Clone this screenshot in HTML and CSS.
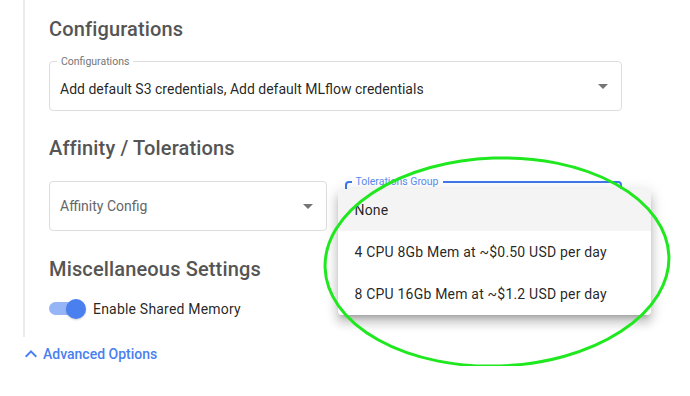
FILE: index.html
```html
<!DOCTYPE html>
<html lang="en">

<head>
  <meta charset="UTF-8">
  <title>Notebook Settings</title>
  <link rel="stylesheet" href="styles.css">
</head>

<body>

  <!-- Advanced section -->
  <div class="adv-section">
    <h2 class="adv-title">Configurations</h2>
    <div class="field field-conf">
      <span class="field-label">Configurations</span>
      <span class="field-value">Add default S3 credentials, Add default MLflow credentials</span>
      <span class="field-arrow"></span>
    </div>

    <h2 class="adv-title adv-title-2">Affinity / Tolerations</h2>
    <div class="field-row">
      <div class="field">
        <span class="field-placeholder">Affinity Config</span>
        <span class="field-arrow"></span>
      </div>
      <div class="field field-focus">
        <span class="field-label">Tolerations Group</span>
        <ul class="menu">
          <li class="menu-item selected">None</li>
          <li class="menu-item">4 CPU 8Gb Mem at ~$0.50 USD per day</li>
          <li class="menu-item">8 CPU 16Gb Mem at ~$1.2 USD per day</li>
        </ul>
      </div>
    </div>

    <h2 class="adv-title adv-title-3">Miscellaneous Settings</h2>
    <div class="switch-row">
      <span class="switch">
        <span class="switch-track"></span>
        <span class="switch-thumb"></span>
      </span>
      <span class="switch-label">Enable Shared Memory</span>
    </div>
  </div>

  <div class="adv-toggle">
    <svg width="24" height="24" viewBox="0 0 24 24"><path fill="currentColor" d="M12 8l-6 6 1.41 1.41L12 10.83l4.59 4.58L18 14z"/></svg>
    <span>Advanced Options</span>
  </div>

  <!-- annotation -->
  <svg class="mark" width="690" height="396" viewBox="0 0 690 396">
    <ellipse cx="497" cy="262" rx="172" ry="104" transform="rotate(-2 497 262)" fill="none" stroke="#1fe81f" stroke-width="3"/>
  </svg>

</body>

</html>
```

FILE: styles.css
```css
* {
  box-sizing: border-box;
}

body {
  margin: 0;
  position: relative;
  font-family: Roboto, "Liberation Sans", sans-serif;
  background: #fff;
  color: rgba(0, 0, 0, 0.87);
}

.adv-section {
  margin-left: 23px;
  width: 600px;
  border-left: 2px solid #ebebeb;
  padding: 17px 0 18px 24px;
}

.adv-title {
  margin: 0;
  font-size: 20px;
  line-height: 24px;
  font-weight: 500;
  letter-spacing: 0.15px;
  color: #555;
}

.adv-title-2 {
  margin-top: 25px;
}

.adv-title-3 {
  margin-top: 26px;
}

.field {
  position: relative;
  display: flex;
  align-items: center;
  height: 50px;
  padding: 0 13px 0 10px;
  border: 1px solid #ddd;
  border-radius: 4px;
  font-size: 14px;
}

.field-conf {
  width: 573px;
  margin-top: 20px;
}

.field-label {
  position: absolute;
  top: -7px;
  left: 7px;
  padding: 0 4px;
  background: #fff;
  font-size: 10.5px;
  line-height: 13px;
  color: #757575;
}

.field-value {
  padding-top: 5px;
  color: rgba(0, 0, 0, 0.87);
}

.field-placeholder {
  color: #666;
}

.field-arrow {
  margin-left: auto;
  width: 0;
  height: 0;
  border-left: 5px solid transparent;
  border-right: 5px solid transparent;
  border-top: 5px solid #757575;
}

.field-row {
  display: grid;
  grid-template-columns: 1fr 1fr;
  gap: 18px;
  width: 573px;
  margin-top: 21px;
}

.field-focus {
  border: 2px solid #3f78ea;
}

.field-focus .field-label {
  top: -8px;
  left: 5px;
  color: #5b8cf0;
}

.menu {
  position: absolute;
  top: 6px;
  left: -9px;
  z-index: 5;
  width: 313px;
  margin: 0;
  padding: 0;
  list-style: none;
  background: #fff;
  border-radius: 4px;
  box-shadow: 0 5px 5px -3px rgba(0, 0, 0, 0.2), 0 8px 10px 1px rgba(0, 0, 0, 0.14), 0 3px 14px 2px rgba(0, 0, 0, 0.12);
  overflow: hidden;
}

.menu-item {
  display: flex;
  align-items: center;
  height: 42px;
  padding: 0 17px;
  font-size: 14px;
  letter-spacing: 0.2px;
  color: rgba(0, 0, 0, 0.87);
}

.menu-item.selected {
  background: #f4f4f4;
}

.switch-row {
  display: flex;
  align-items: center;
  margin-top: 18px;
  height: 20px;
}

.switch {
  position: relative;
  width: 37px;
  height: 20px;
}

.switch-track {
  position: absolute;
  top: 3px;
  left: 0;
  width: 34px;
  height: 13px;
  border-radius: 7px;
  background: #95b5f7;
}

.switch-thumb {
  position: absolute;
  top: 0;
  right: 0;
  width: 20px;
  height: 20px;
  border-radius: 50%;
  background: #4a7ff0;
  box-shadow: 0 1px 2px rgba(0, 0, 0, 0.2);
}

.switch-label {
  margin-left: 7px;
  font-size: 14px;
  letter-spacing: 0.2px;
  color: rgba(0, 0, 0, 0.87);
}

.adv-toggle {
  display: flex;
  align-items: center;
  margin: 5px 0 0 19px;
  color: #4a7ff0;
  font-size: 14px;
  font-weight: 500;
}

.mark {
  position: absolute;
  top: 0;
  left: 0;
  z-index: 10;
  pointer-events: none;
}
```
